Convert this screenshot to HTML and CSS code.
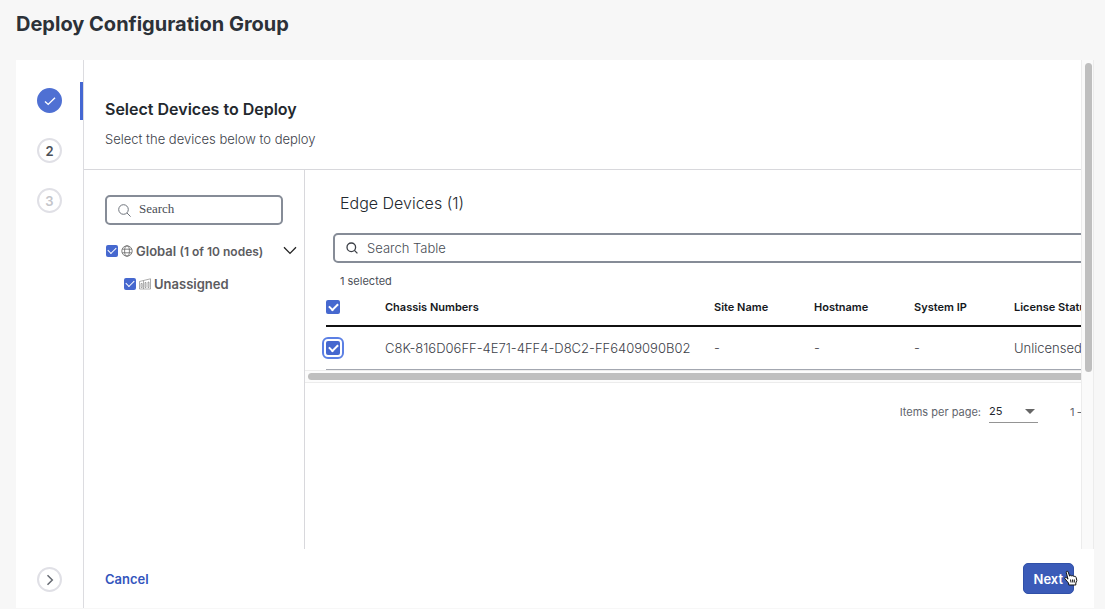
FILE: index.html
```html
<!DOCTYPE html>
<html lang="en">

<head>
  <meta charset="UTF-8" />
  <meta name="viewport" content="width=device-width,initial-scale=1.0" />
  <title>Deploy Configuration Group</title>
  <link rel="stylesheet" href="styles.css">
</head>

<body>
  <header class="page-header">
    <h1>Deploy Configuration Group</h1>
  </header>

  <div class="wizard">
    <nav class="rail" aria-label="Steps">
      <ol class="steps">
        <li class="step done">
          <svg width="14" height="14" viewBox="0 0 14 14" fill="none" stroke="#fff" stroke-width="1.4">
            <path d="M2 7.4l3.2 3L12 3.8" />
          </svg>
        </li>
        <li class="step">2</li>
        <li class="step disabled">3</li>
      </ol>
      <button class="step expand" type="button" aria-label="Expand steps">
        <svg width="12" height="12" viewBox="0 0 12 12" fill="none" stroke="#656a72" stroke-width="1.5">
          <path d="M3.500 1.200L8.300 6 3.500 10.800" />
        </svg>
      </button>
    </nav>

    <main class="main">
      <div class="scroll-area">
        <div class="content">
          <section class="intro">
            <h2>Select Devices to Deploy</h2>
            <p>Select the devices below to deploy</p>
          </section>

          <div class="split">
            <aside class="tree">
              <label class="search tree-search">
                <svg width="13" height="13" viewBox="0 0 13 13" fill="none" stroke="#6f747c" stroke-width="1">
                  <circle cx="5.5" cy="5.5" r="4.8" />
                  <path d="M9 9l3.6 3.6" />
                </svg>
                <input type="text" placeholder="Search" aria-label="Search">
              </label>

              <div class="node">
                <input class="check small" type="checkbox" id="node-global" checked>
                <svg width="12" height="12" viewBox="0 0 12 12" fill="none" stroke="#666" stroke-width="0.8">
                  <circle cx="6" cy="6" r="5.2" />
                  <ellipse cx="6" cy="6" rx="2.4" ry="5.2" />
                  <path d="M1.200 4.2h9.600M1.200 7.8h9.600" />
                </svg>
                <label for="node-global">Global <small>(1 of 10 nodes)</small></label>
                <button class="toggle" type="button" aria-label="Collapse Global">
                  <svg width="14" height="9" viewBox="0 0 14 9" fill="none" stroke="#222" stroke-width="1.3">
                    <path d="M1 1.2l6 6.2 6-6.2" />
                  </svg>
                </button>
              </div>

              <div class="node child">
                <input class="check small" type="checkbox" id="node-unassigned" checked>
                <svg width="12" height="12" viewBox="0 0 12 12" fill="none" stroke="#777" stroke-width="0.6">
                  <path d="M.5 11V3.500L4.500 2.500 11.500.800V11zM4.500 2.500V11M2 9.500V5.500h1.200v4zM6 9.500v-5h1v5zM9 9.500v-5.500h1v5.500z" />
                </svg>
                <label for="node-unassigned">Unassigned</label>
              </div>
            </aside>

            <section class="devices">
              <div class="devices-inner">
                <h3>Edge Devices (1)</h3>
                <label class="search table-search">
                  <svg width="12" height="12" viewBox="0 0 12 12" fill="none" stroke="#3c4047" stroke-width="1.3">
                    <circle cx="5.300" cy="5.300" r="4.300" />
                    <path d="M8.400 8.400l3 3" />
                  </svg>
                  <input type="text" placeholder="Search Table" aria-label="Search Table">
                </label>
                <p class="selected">1 selected</p>

                <table class="grid">
                  <thead>
                    <tr>
                      <th class="col-check"><input class="check" type="checkbox" aria-label="Select all" checked></th>
                      <th class="col-chassis">Chassis Numbers</th>
                      <th class="col">Site Name</th>
                      <th class="col">Hostname</th>
                      <th class="col">System IP</th>
                      <th>License Status</th>
                    </tr>
                  </thead>
                  <tbody>
                    <tr>
                      <td><input class="check focused" type="checkbox" aria-label="Select device" checked></td>
                      <td>C8K-816D06FF-4E71-4FF4-D8C2-FF6409090B02</td>
                      <td>-</td>
                      <td>-</td>
                      <td>-</td>
                      <td>Unlicensed</td>
                    </tr>
                  </tbody>
                </table>
              </div>

              <div class="hbar"><div class="hthumb"></div></div>

              <div class="devices-inner">
                <div class="paginator">
                  <label for="page-size">Items per page:</label>
                  <span class="page-size">
                    <select id="page-size">
                      <option>25</option>
                      <option>50</option>
                      <option>100</option>
                    </select>
                  </span>
                  <span class="range">1 – 1 of 1</span>
                </div>
              </div>
            </section>
          </div>
        </div>

        <div class="vbar"><div class="vthumb"></div></div>
      </div>

      <footer class="actions">
        <button class="cancel" type="button">Cancel</button>
        <button class="next" type="button">Next
          <svg class="pointer" width="14" height="16" viewBox="0 0 14 16" fill="#fff" stroke="#111" stroke-width="1" stroke-linejoin="round">
            <path d="M4.800 15L4.500 13 1 8.800C.3 7.700 1.600 6.900 2.600 7.800L4 9.200 2.300 2.600C2 1 3.700.6 4.200 2L5.600 6.200C5.600 5 7.400 4.900 7.800 6.200 8.200 5.200 9.700 5.400 10 6.700 10.600 5.900 12 6.300 12.200 7.600L12.800 10.500 11.800 13V15z" />
            <path d="M6.500 9.500l.5 3M8.500 9.500l.3 3M10.300 9.500v3" />
          </svg>
        </button>
      </footer>
    </main>
  </div>
</body>

</html>
```

FILE: styles.css
```css
* {
  box-sizing: border-box;
}

body {
  margin: 0;
  min-height: 100vh;
  display: flex;
  flex-direction: column;
  background-color: #f7f7f7;
  color: #23282e;
  font-family: Inter, "Liberation Sans", sans-serif;
  font-size: 13px;
}

h1, h2, h3, p, ol {
  margin: 0;
  padding: 0;
}

button, input, select {
  font: inherit;
}

button {
  cursor: pointer;
}

svg {
  flex: none;
}

.page-header {
  height: 60px;
  padding: 12px 16px;
}

h1 {
  font-size: 20px;
  line-height: 24px;
  font-weight: 700;
  color: #2c3138;
}

.wizard {
  flex: 1;
  display: flex;
  margin: 0 11px 1px 16px;
  background-color: #fff;
}

/* Step rail */
.rail {
  flex: none;
  width: 68px;
  display: flex;
  flex-direction: column;
  justify-content: space-between;
  padding: 22px 0 16px;
  border-right: 1px solid #dcdce0;
}

.steps {
  display: flex;
  flex-direction: column;
  gap: 13px;
  list-style: none;
  background: linear-gradient(#4467d2, #4467d2) right top / 3px 38px no-repeat;
}

.step {
  display: flex;
  align-items: center;
  justify-content: center;
  width: 25px;
  height: 25px;
  margin: 6px 21px;
  padding: 0;
  border: 2px solid #e0e0e6;
  border-radius: 50%;
  background-color: #fff;
  color: #4b5058;
  font-weight: 600;
}

.step.done {
  border-color: #4f70d3;
  background-color: #4f70d3;
}

.step.disabled {
  color: #c4c5ca;
}

.step.expand {
  margin: 0 21px;
}

.main {
  flex: 1;
  min-width: 0;
  display: flex;
  flex-direction: column;
}

.scroll-area {
  flex: 1;
  display: flex;
}

.content {
  flex: 1;
  min-width: 0;
  display: flex;
  flex-direction: column;
}

.intro {
  padding: 38px 21px 19px;
  border-bottom: 1px solid #d8d8dc;
}

h2 {
  font-size: 16px;
  line-height: 22px;
  font-weight: 600;
}

.intro p {
  margin-top: 9px;
  line-height: 21px;
  font-weight: 300;
  color: #3c4149;
}

.split {
  flex: 1;
  display: flex;
}

/* Node tree */
.tree {
  flex: none;
  width: 221px;
  padding: 25px 7px 0 21px;
  border-right: 1px solid #d8d8dc;
}

.search {
  display: flex;
  align-items: center;
  height: 30px;
  border: 2px solid #868c97;
  border-radius: 5px;
  background-color: #fff;
}

.search input {
  flex: 1;
  min-width: 0;
  padding: 0;
  border: 0;
  outline: 0;
  background: none;
}

.search input::placeholder {
  color: #484d55;
  opacity: 1;
}

.tree-search {
  gap: 8px;
  margin-right: 14px;
  padding-left: 11px;
}

.tree-search input {
  padding-bottom: 2px;
  font-family: "Liberation Serif", serif;
}

.table-search input {
  font-weight: 300;
}

.node {
  display: flex;
  align-items: center;
  gap: 3px;
  height: 33px;
  padding-left: 1px;
  color: #5c5c5f;
  font-weight: 600;
}

.tree-search + .node {
  margin-top: 9px;
}

.node small {
  font-size: 12px;
}

.node.child {
  padding-left: 19px;
}

.toggle {
  display: flex;
  margin-left: auto;
  padding: 0;
  border: 0;
  background: none;
}

.check {
  appearance: none;
  flex: none;
  display: grid;
  place-items: center;
  width: 14px;
  height: 14px;
  margin: 0;
  border: 0;
  border-radius: 2px;
  background-color: #4668cf;
}

.check:checked::after {
  content: "";
  width: 7px;
  height: 4px;
  margin-bottom: 2px;
  border: solid #fff;
  border-width: 0 0 2px 2px;
  transform: rotate(-45deg);
}

.check.small {
  width: 12px;
  height: 12px;
}

.check.small:checked::after {
  border-width: 0 0 1px 1px;
}

.check.focused {
  outline: 2px solid #5c80e4;
  outline-offset: 2px;
}

/* Device table */
.devices {
  flex: 1;
  min-width: 0;
  overflow: hidden;
}

.devices-inner {
  width: calc(100% + 120px);
  padding-left: 21px;
}

h3 {
  padding: 21px 14px 0;
  font-size: 16px;
  line-height: 24px;
  font-weight: 300;
}

.table-search {
  gap: 9px;
  margin: 18px 0 0 7px;
  padding-left: 11px;
}

.selected {
  padding: 10px 14px 0;
  font-size: 11px;
  line-height: 16px;
  color: #4b5058;
}

.grid {
  width: 100%;
  table-layout: fixed;
  border-collapse: collapse;
  text-align: left;
}

.grid th,
.grid td {
  padding: 0;
  white-space: nowrap;
}

.grid th {
  height: 37px;
  border-bottom: 2px solid #111;
  color: #15181c;
  font-size: 11px;
  font-weight: 600;
}

.grid td {
  height: 43px;
  border-bottom: 1px solid #a3a7b0;
  color: #3c4149;
  font-weight: 300;
}

.col-check {
  width: 59px;
}

.col-chassis {
  width: 329px;
}

.col {
  width: 100px;
}

/* Scroll bars */
.hbar {
  height: 13px;
  padding: 2px 0 2px 3px;
  border: solid #ececec;
  border-width: 1px 0;
  background-color: #fcfcfc;
}

.hthumb {
  height: 7px;
  border-radius: 4px 0 0 4px;
  background-color: #bfbfbf;
}

.vbar {
  flex: none;
  width: 13px;
  padding: 3px 1px 3px 3px;
  border: solid #ececec;
  border-width: 0 1px;
  background-color: #fafafa;
}

.vthumb {
  width: 7px;
  height: 64%;
  border-radius: 4px;
  background-color: #bfbfbf;
}

.paginator {
  display: flex;
  align-items: center;
  justify-content: flex-end;
  height: 58px;
  font-size: 11px;
  color: #5f646c;
}

.page-size {
  position: relative;
  width: 49px;
  margin: 0 32px 0 8px;
  border-bottom: 1px solid #949494;
}

.page-size::after {
  content: "";
  position: absolute;
  top: 8px;
  right: 3px;
  border: solid transparent;
  border-width: 5px 5px 0;
  border-top-color: #666;
  pointer-events: none;
}

.page-size select {
  appearance: none;
  width: 100%;
  height: 21px;
  padding: 0;
  border: 0;
  background: none;
  color: #23282e;
}

.range {
  width: 131px;
}

/* Footer */
.actions {
  display: flex;
  align-items: center;
  justify-content: space-between;
  height: 59px;
  padding: 0 20px 0 21px;
}

.cancel {
  padding: 0;
  border: 0;
  background: none;
  color: #3355bd;
  font-weight: 600;
}

.next {
  position: relative;
  height: 31px;
  padding: 0 10px;
  border: 1px solid #3050a8;
  border-radius: 5px;
  background-color: #3b5bb8;
  color: #fff;
  font-weight: 600;
}

.pointer {
  position: absolute;
  right: -5px;
  bottom: 7px;
}
```
